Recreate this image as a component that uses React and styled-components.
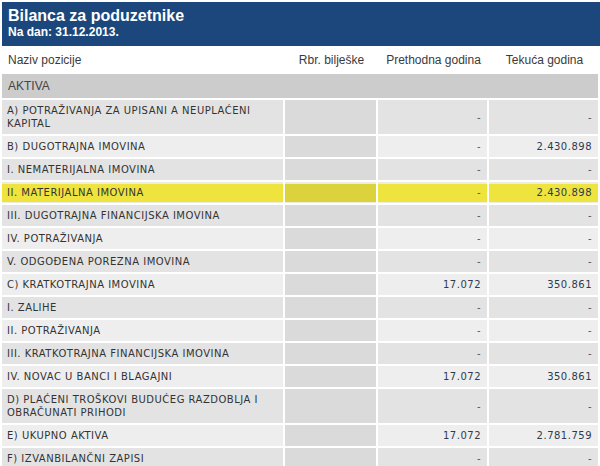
import React from 'react'
import styled, { createGlobalStyle } from 'styled-components'

const GlobalStyle = createGlobalStyle`
    html, body {
        margin: 0;
        padding: 0;
        background: #ffffff;
    }
    body {
        font-family: Arial, 'Liberation Sans', sans-serif;
    }
`

const rows = [
    { label: 'A) POTRAŽIVANJA ZA UPISANI A NEUPLAĆENI KAPITAL', prev: '-', curr: '-' },
    { label: 'B) DUGOTRAJNA IMOVINA', prev: '-', curr: '2.430.898' },
    { label: 'I. NEMATERIJALNA IMOVINA', prev: '-', curr: '-' },
    { label: 'II. MATERIJALNA IMOVINA', prev: '-', curr: '2.430.898', active: true },
    { label: 'III. DUGOTRAJNA FINANCIJSKA IMOVINA', prev: '-', curr: '-' },
    { label: 'IV. POTRAŽIVANJA', prev: '-', curr: '-' },
    { label: 'V. ODGOĐENA POREZNA IMOVINA', prev: '-', curr: '-' },
    { label: 'C) KRATKOTRAJNA IMOVINA', prev: '17.072', curr: '350.861' },
    { label: 'I. ZALIHE', prev: '-', curr: '-' },
    { label: 'II. POTRAŽIVANJA', prev: '-', curr: '-' },
    { label: 'III. KRATKOTRAJNA FINANCIJSKA IMOVINA', prev: '-', curr: '-' },
    { label: 'IV. NOVAC U BANCI I BLAGAJNI', prev: '17.072', curr: '350.861' },
    { label: 'D) PLAĆENI TROŠKOVI BUDUĆEG RAZDOBLJA I OBRAČUNATI PRIHODI', prev: '-', curr: '-' },
    { label: 'E) UKUPNO AKTIVA', prev: '17.072', curr: '2.781.759' },
    { label: 'F) IZVANBILANČNI ZAPISI', prev: '-', curr: '-' },
]

const Bilanca = () => {
    return (
        <Page>
            <GlobalStyle />
            <Header>
                <h1>Bilanca za poduzetnike</h1>
                <h2>Na dan: 31.12.2013.</h2>
            </Header>
            <Table>
                <colgroup>
                    <col style={{ width: 281 }} />
                    <col style={{ width: 91 }} />
                    <col style={{ width: 109 }} />
                    <col style={{ width: 109 }} />
                </colgroup>
                <thead>
                    <tr>
                        <HeadCell $left>Naziv pozicije</HeadCell>
                        <HeadCell>Rbr. bilješke</HeadCell>
                        <HeadCell>Prethodna godina</HeadCell>
                        <HeadCell>Tekuća godina</HeadCell>
                    </tr>
                </thead>
                <tbody>
                    <tr>
                        <SectionCell colSpan={4}>AKTIVA</SectionCell>
                    </tr>
                    {rows.map((r, i) => (
                        <Row key={r.label} $odd={i % 2 === 0} $active={r.active}>
                            <LabelCell>{r.label}</LabelCell>
                            <NoteCell></NoteCell>
                            <ValueCell $num={r.prev !== '-'}>{r.prev}</ValueCell>
                            <ValueCell $num={r.curr !== '-'}>{r.curr}</ValueCell>
                        </Row>
                    ))}
                </tbody>
            </Table>
        </Page>
    )
}

const Page = styled.div`
    width: 600px;
    padding-top: 2px;
`

const Header = styled.div`
    margin-left: 2px;
    padding: 5px 6px 7px 6px;
    background: #1b477c;
    color: #ffffff;

    h1 {
        margin: 0;
        font-size: 16px;
        line-height: 18px;
        font-weight: bold;
    }

    h2 {
        margin: 0;
        font-size: 12px;
        line-height: 14px;
        font-weight: bold;
    }
`

const Table = styled.table`
    width: 600px;
    table-layout: fixed;
    border-collapse: separate;
    border-spacing: 2px;
    margin: 0;
`

const HeadCell = styled.th`
    height: 24px;
    padding: 0 4px 0 6px;
    font-family: Arial, 'Liberation Sans', sans-serif;
    font-size: 12px;
    font-weight: normal;
    color: #3a3a3a;
    text-align: ${p => (p.$left ? 'left' : 'center')};
    white-space: nowrap;
    background: #ffffff;
`

const SectionCell = styled.td`
    height: 24px;
    padding: 0 6px;
    background: #cccccc;
    font-family: Arial, 'Liberation Sans', sans-serif;
    font-size: 12px;
    color: #444444;
`

const Row = styled.tr`
    td {
        background: ${p => (p.$active ? '#efe33e' : p.$odd ? '#e3e3e3' : '#eeeeee')};
        box-shadow: ${p => (p.$active ? 'inset 0 2px #ececdf, inset 0 -1px #ececdf' : 'none')};
    }
    td:nth-child(2) {
        background: ${p => (p.$active ? '#dcd23c' : '#dadada')};
    }
`

const BodyCell = styled.td`
    padding: 4px 6px 4px 5px;
    font-family: Verdana, 'DejaVu Sans', sans-serif;
    font-size: 10px;
    line-height: 13px;
    letter-spacing: 0.5px;
    color: #333333;
    vertical-align: middle;
`

const LabelCell = styled(BodyCell)`
    text-align: left;
`

const NoteCell = styled(BodyCell)``

const ValueCell = styled(BodyCell)`
    text-align: right;
    color: ${p => (p.$num ? '#2d3a4f' : '#555555')};
`

export default Bilanca
